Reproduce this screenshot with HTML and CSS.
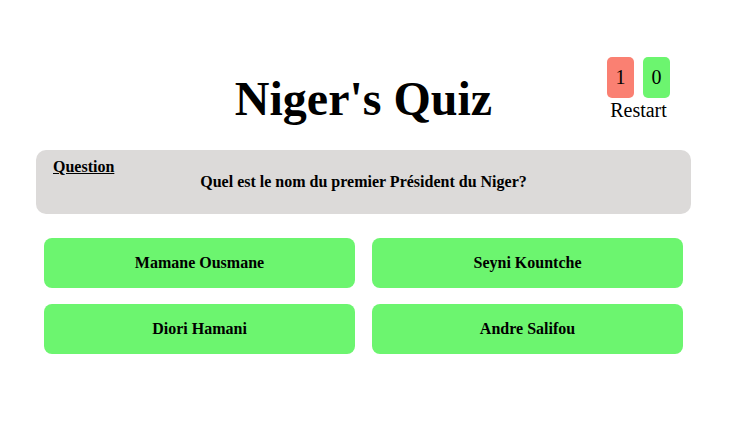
FILE: index.html
```html
<!DOCTYPE html>
<html lang="fr">
<head>
<meta charset="utf-8">
<title>Niger's Quiz</title>
<link rel="stylesheet" href="styles.css">
</head>
<body>
<main class="quiz">
  <header class="quiz-header">
    <h1 class="quiz-title">Niger's Quiz</h1>
    <div class="score">
      <div class="score-boxes">
        <span class="score-box score-wrong">1</span>
        <span class="score-box score-right">0</span>
      </div>
      <div class="restart">Restart</div>
    </div>
  </header>
  <section class="question-card">
    <div class="question-label">Question</div>
    <div class="question-text">Quel est le nom du premier Président du Niger?</div>
  </section>
  <section class="answers">
    <button class="answer">Mamane Ousmane</button>
    <button class="answer">Seyni Kountche</button>
    <button class="answer">Diori Hamani</button>
    <button class="answer">Andre Salifou</button>
  </section>
</main>
</body>
</html>
```
FILE: styles.css
```css
html, body {
  margin: 0;
  padding: 0;
  background: #ffffff;
  font-family: "Liberation Serif", "Times New Roman", serif;
  color: #000;
}

.quiz {
  width: 655px;
  margin-left: 36px;
}

.quiz-header {
  display: grid;
  grid-template-columns: 1fr auto 1fr;
  padding-top: 57px;
}

.quiz-title {
  grid-column: 2;
  margin: 15px 0 0 0;
  font-size: 48px;
  font-weight: bold;
  line-height: 53px;
}

.score {
  grid-column: 3;
  justify-self: end;
  margin-right: 21px;
  display: flex;
  flex-direction: column;
  align-items: center;
}

.score-boxes {
  display: flex;
  gap: 9px;
}

.score-box {
  display: block;
  width: 27px;
  height: 41px;
  box-sizing: border-box;
  padding-top: 9px;
  text-align: center;
  font-size: 20px;
  line-height: 23px;
  border-radius: 5px;
}

.score-wrong { background: #fa8072; }
.score-right { background: #6cf56f; }

.restart {
  font-size: 20px;
  line-height: 23px;
  margin-top: 1px;
}

.question-card {
  margin-top: 25px;
  background: #dcdad9;
  border-radius: 10px;
  padding: 10px 17px 0;
  height: 64px;
  box-sizing: border-box;
}

.question-label {
  font-size: 16px;
  font-weight: bold;
  text-decoration: underline;
  line-height: 14px;
}

.question-text {
  font-size: 16px;
  font-weight: bold;
  text-align: center;
  line-height: 15px;
}

.answers {
  margin: 24px 8px 0;
  display: grid;
  grid-template-columns: 1fr 1fr;
  gap: 16px 17px;
}

.answer {
  height: 50px;
  border: none;
  border-radius: 8px;
  background: #6cf56f;
  font-family: "Liberation Serif", "Times New Roman", serif;
  font-size: 16px;
  font-weight: bold;
  color: #000;
  padding: 0;
}
```
